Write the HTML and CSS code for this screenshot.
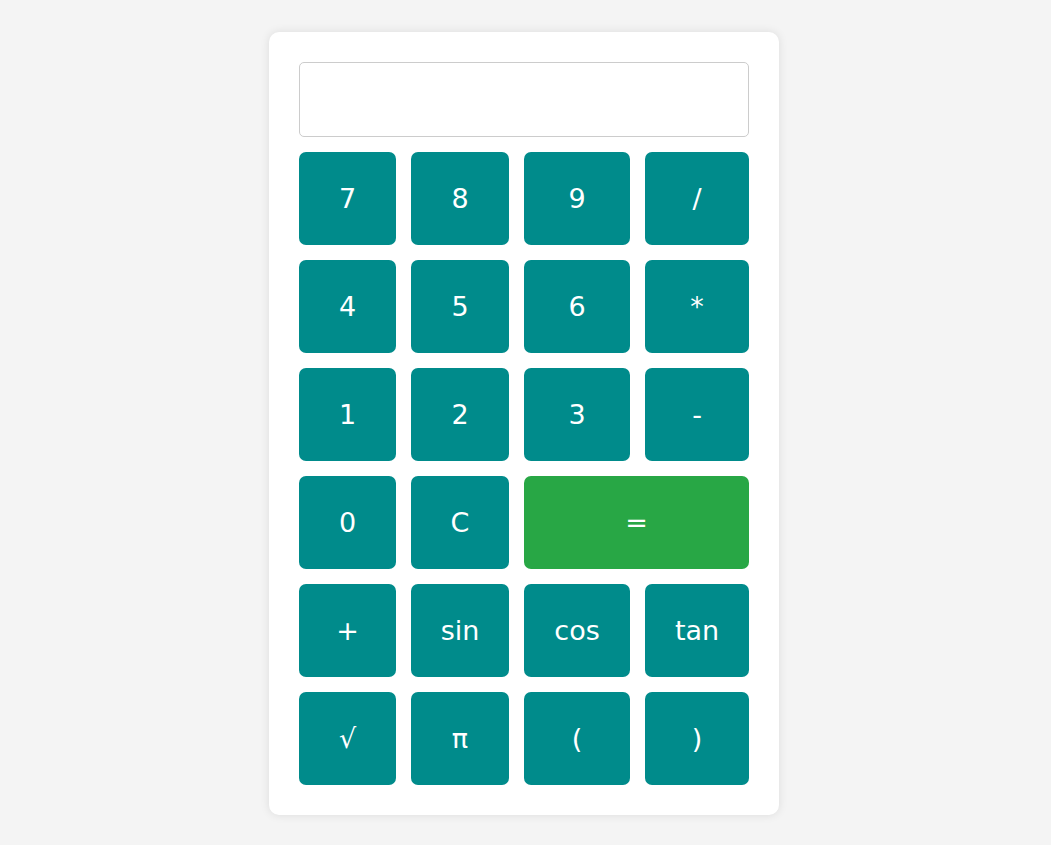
FILE: index.html
```html
<!DOCTYPE html>
<html lang="en">
<head>
<meta charset="utf-8">
<title>Calculator</title>
<link rel="stylesheet" href="styles.css">
</head>
<body>
<div class="calculator">
  <input class="display" type="text" readonly>
  <div class="keys">
    <button class="key">7</button>
    <button class="key">8</button>
    <button class="key">9</button>
    <button class="key">/</button>
    <button class="key">4</button>
    <button class="key">5</button>
    <button class="key">6</button>
    <button class="key">*</button>
    <button class="key">1</button>
    <button class="key">2</button>
    <button class="key">3</button>
    <button class="key">-</button>
    <button class="key">0</button>
    <button class="key">C</button>
    <button class="key key-equals">=</button>
    <button class="key">+</button>
    <button class="key">sin</button>
    <button class="key">cos</button>
    <button class="key">tan</button>
    <button class="key">√</button>
    <button class="key">π</button>
    <button class="key">(</button>
    <button class="key">)</button>
  </div>
</div>
</body>
</html>
```
FILE: styles.css
```css
html, body {
  margin: 0;
  padding: 0;
}
body {
  background: #f4f4f4;
  font-family: "DejaVu Sans", sans-serif;
  display: flex;
  justify-content: center;
  padding-top: 32px;
  min-height: 845px;
  box-sizing: border-box;
}
.calculator {
  width: 510px;
  box-sizing: border-box;
  background: #ffffff;
  border-radius: 10px;
  padding: 30px;
  box-shadow: 0 0 10px rgba(0, 0, 0, 0.1);
  align-self: flex-start;
  margin-right: 3px;
}
.display {
  display: block;
  width: 100%;
  height: 75px;
  box-sizing: border-box;
  border: 1px solid #cccccc;
  border-radius: 5px;
  margin: 0 0 15px 0;
  padding: 10px;
  font-family: "DejaVu Sans", sans-serif;
  font-size: 27px;
  text-align: right;
  outline: none;
}
.keys {
  display: grid;
  grid-template-columns: 97px 98px 106px 104px;
  grid-auto-rows: 93px;
  gap: 15px;
}
.key {
  background: #008b8b;
  color: #ffffff;
  border: none;
  border-radius: 7px;
  font-family: "DejaVu Sans", sans-serif;
  font-size: 27px;
  padding: 0;
  margin: 0;
  cursor: pointer;
}
.key-equals {
  grid-column: span 2;
  background: #28a745;
}
```
